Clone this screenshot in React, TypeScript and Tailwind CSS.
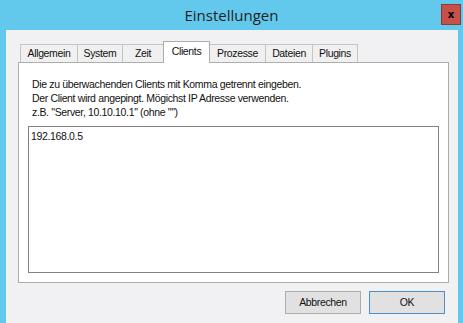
import { useState } from "react";

const tabs = ["Allgemein", "System", "Zeit", "Clients", "Prozesse", "Dateien", "Plugins"];
// widths measured from the dialog, borders included
const tabWidths: Record<string, string> = {
  Allgemein: "w-[57px]",
  System: "w-[45px]",
  Zeit: "w-[41px]",
  Clients: "w-[47px]",
  Prozesse: "w-[55px]",
  Dateien: "w-[47px]",
  Plugins: "w-[46px]",
};

export default function App() {
  const [active, setActive] = useState("Clients");
  const [clients, setClients] = useState("192.168.0.5");

  const activeIndex = tabs.indexOf(active);

  return (
    <div className="w-[463px] h-[323px] bg-[#62c9ec] flex flex-col overflow-hidden font-['Liberation_Sans',Arial,sans-serif] text-[10.5px] tracking-[-0.35px] text-[#111]">
      {/* Title bar */}
      <div className="h-[30px] shrink-0 grid grid-cols-[1fr_auto_1fr] items-start">
        <div />
        <div className="pt-[5px] font-['Open_Sans',sans-serif] text-[15px] tracking-normal leading-[20px] text-[#1e1e1e]">
          Einstellungen
        </div>
        <div className="flex justify-end pr-[2px] pt-[4px]">
          <button className="w-[20px] h-[21px] bg-[#c7504a] border border-[#8c3a36] flex items-center justify-center font-['DejaVu_Sans',sans-serif] text-[10px] tracking-normal font-bold leading-none text-black">
            x
          </button>
        </div>
      </div>

      {/* Client area */}
      <div className="flex-1 ml-[6px] mr-[5px] bg-[#f1f0f2] flex flex-col pt-[11px] pl-[12px] pr-[9px]">
        {/* Tab strip */}
        <div className="flex items-end h-[21px] ml-[2px]">
          {tabs.map((t, i) => {
            const selected = t === active;
            const afterSelected = i === activeIndex + 1;
            const last = i === tabs.length - 1;
            return (
              <div
                key={t}
                onClick={() => setActive(t)}
                className={
                  selected
                    ? `${tabWidths[t]} h-[22px] -mb-px relative z-10 bg-white border border-b-0 border-[#adadad] flex items-center justify-center pb-[2px] cursor-default`
                    : `${tabWidths[t]} h-[18px] bg-[#f0f0f0] border-t border-[#c4c4c4] ${afterSelected ? "" : "border-l"} ${last ? "border-r" : ""} flex items-center justify-center cursor-default`
                }
              >
                {t}
              </div>
            );
          })}
        </div>

        {/* Tab page */}
        <div className="h-[221px] bg-white border border-[#adadad] flex flex-col">
          <div className="pl-[13px] pt-[14px] leading-[14px]">
            <div>Die zu überwachenden Clients mit Komma getrennt eingeben.</div>
            <div>Der Client wird angepingt. Mögichst IP Adresse verwenden.</div>
            <div>z.B. "Server, 10.10.10.1" (ohne "")</div>
          </div>
          <textarea
            value={clients}
            onChange={(e) => setClients(e.target.value)}
            className="mt-[7px] ml-[9px] mr-[9px] h-[147px] resize-none border border-[#828282] bg-white px-[2px] py-[2px] leading-[14px] text-[10.5px] tracking-[-0.35px] text-[#111] outline-none font-['Liberation_Sans',Arial,sans-serif]"
          />
        </div>

        {/* Buttons */}
        <div className="flex justify-end gap-[8px] mt-[8px] pr-[4px]">
          <button className="w-[76px] h-[23px] bg-[#e1e1e1] border border-[#adadad]">Abbrechen</button>
          <button className="w-[76px] h-[23px] bg-[#e1e1e1] border border-[#4a90c9]">OK</button>
        </div>
      </div>
    </div>
  );
}
